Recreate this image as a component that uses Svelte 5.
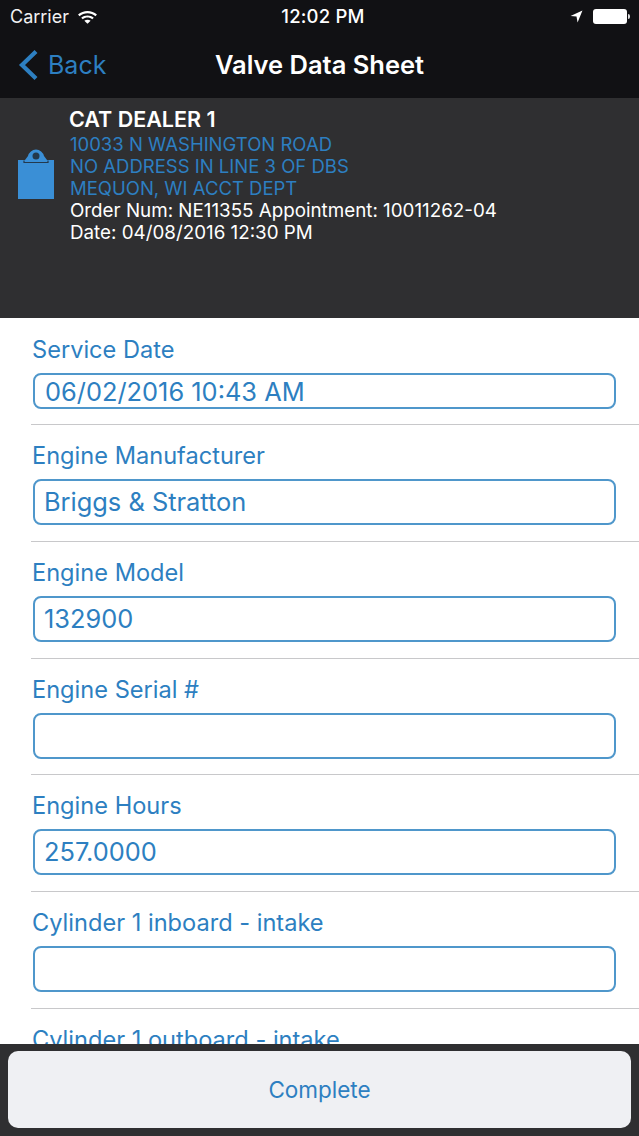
<script>
  const fields = [
    { label: 'Service Date', value: '06/02/2016 10:43 AM', short: true },
    { label: 'Engine Manufacturer', value: 'Briggs & Stratton' },
    { label: 'Engine Model', value: '132900' },
    { label: 'Engine Serial #', value: '' },
    { label: 'Engine Hours', value: '257.0000' },
    { label: 'Cylinder 1 inboard - intake', value: '' },
    { label: 'Cylinder 1 outboard - intake', value: '' }
  ];
</script>

<div class="page">
  <header class="top">
    <div class="status">
      <div class="st-left">
        <span>Carrier</span>
        <svg class="wifi" width="21" height="15" viewBox="0 0 20 14">
          <path d="M1 5.2C5.8 .6 14.2 .6 19 5.2l-1.400 1.500C13.500 3 6.500 3 2.400 6.700z" fill="#fff"/>
          <path d="M4 8.200c3.300-3 8.700-3 12 0l-1.500 1.500c-2.500-2.200-6.500-2.200-9 0z" fill="#fff"/>
          <path d="M7 11.100c1.700-1.400 4.300-1.400 6 0L10 14z" fill="#fff"/>
        </svg>
      </div>
      <span class="time">12:02 PM</span>
      <div class="st-right">
        <svg width="13" height="13" viewBox="0 0 12 12"><path d="M0.500 5.500 11.500 0.500 7 11.500 6 6z" fill="#fff"/></svg>
        <div class="battery"></div><div class="nub"></div>
      </div>
    </div>
    <nav class="nav">
      <div class="back">
        <svg width="21" height="32" viewBox="0 0 21 32"><path d="M18 2.500 4 16l14 13.500" fill="none" stroke="#2d7fc1" stroke-width="4.200"/></svg>
        <span>Back</span>
      </div>
      <div class="title">Valve Data Sheet</div>
    </nav>
  </header>

  <section class="info">
    <svg class="bag" width="36" height="52" viewBox="0 0 36 52">
      <path d="M0 13h7l3-4a8.200 8.200 0 0 1 16 0l3 4h7v39H0z" fill="#3a8fd6"/>
      <circle cx="18" cy="9" r="3.500" fill="#23394d"/>
      <path d="M6 13.500v2h24v-2" fill="none" stroke="#23394d" stroke-width="1.200"/>
    </svg>
    <div class="lines">
      <div class="dealer">CAT DEALER 1</div>
      <div class="addr">10033 N WASHINGTON ROAD</div>
      <div class="addr">NO ADDRESS IN LINE 3 OF DBS</div>
      <div class="addr">MEQUON, WI ACCT DEPT</div>
      <div class="meta first">Order Num: NE11355 Appointment: 10011262-04</div>
      <div class="meta">Date: 04/08/2016 12:30 PM</div>
    </div>
  </section>

  <main class="list">
    {#each fields as f}
      <div class="row" class:short={f.short}>
        <div class="label">{f.label}</div>
        <div class="input">{f.value}</div>
      </div>
    {/each}
  </main>

  <footer class="foot">
    <button class="complete">Complete</button>
  </footer>
</div>

<style>
  :global(body) { margin: 0; background: #fff; }
  .page {
    width: 639px; height: 1136px; display: flex; flex-direction: column; overflow: hidden;
    font-family: Inter, "Liberation Sans", sans-serif; background: #fff;
  }
  .top { background: #111114; height: 98px; flex: none; color: #fff; }
  .status {
    height: 32px; padding: 0 9px 0 10px; display: grid; grid-template-columns: 1fr auto 1fr; align-items: center;
    font-size: 18px;
  }
  .st-left { display: flex; align-items: center; gap: 8px; color: #f2f2f2; }
  .time { font-weight: 500; font-size: 18.500px; letter-spacing: .2px; margin-left: 6px; }
  .st-right { display: flex; align-items: center; justify-content: flex-end; }
  .st-right svg { margin-right: 10px; }
  .battery { width: 34px; height: 15px; background: #fff; border-radius: 3px; }
  .nub { width: 2px; height: 5px; background: #ddd; margin-left: 1px; border-radius: 0 2px 2px 0; }
  .nav {
    height: 66px; box-sizing: border-box; padding-bottom: 2px; position: relative;
    display: flex; align-items: center; justify-content: center;
  }
  .back {
    position: absolute; left: 18px; top: 17px; display: flex; align-items: center; gap: 9px;
    color: #2d7fc1; font-size: 25px;
  }
  .title { font-size: 25.500px; font-weight: 600; }
  .info {
    height: 220px; flex: none; background: #2f2f31; box-sizing: border-box; padding: 10px 0 0 18px;
    display: flex; gap: 16px; align-items: flex-start;
  }
  .bag { margin-top: 39px; flex: none; }
  .lines { line-height: 22px; font-size: 18.800px; color: #fff; }
  .dealer { font-weight: 600; font-size: 21.500px; margin-bottom: 3px; margin-left: -1px; }
  .addr { color: #2d7fc1; font-size: 18.500px; }
  .meta.first { margin-top: 1px; }
  .list { flex: 1; min-height: 0; overflow: hidden; }
  .row {
    box-sizing: border-box; height: 116.800px; padding: 16px 23px 0 33px; position: relative;
    display: flex; flex-direction: column;
  }
  .row::after {
    content: ""; position: absolute; left: 31px; right: 0; bottom: 0; height: 1px; background: #c8c8ca;
  }
  .row.short { height: 107px; padding-top: 17px; }
  .label { color: #2d7fc1; font-size: 23.600px; line-height: 30px; margin-left: -1px; }
  .input {
    box-sizing: border-box; height: 46px; margin-top: 8px; border: 2px solid #4f97cb; border-radius: 8px;
    padding: 0 9px; color: #2d7fc1; font-size: 25.400px; line-height: 42px;
  }
  .short .input { height: 36px; line-height: 33px; padding: 0 10px; }
  .foot { flex: none; height: 92px; background: #2f2f31; box-sizing: border-box; padding: 7px 8px 8px; }
  .complete {
    width: 100%; height: 100%; border: 0; border-radius: 10px; background: #eff0f3; color: #2d7fc1;
    font: inherit; font-size: 22.500px; padding: 0;
  }
</style>
